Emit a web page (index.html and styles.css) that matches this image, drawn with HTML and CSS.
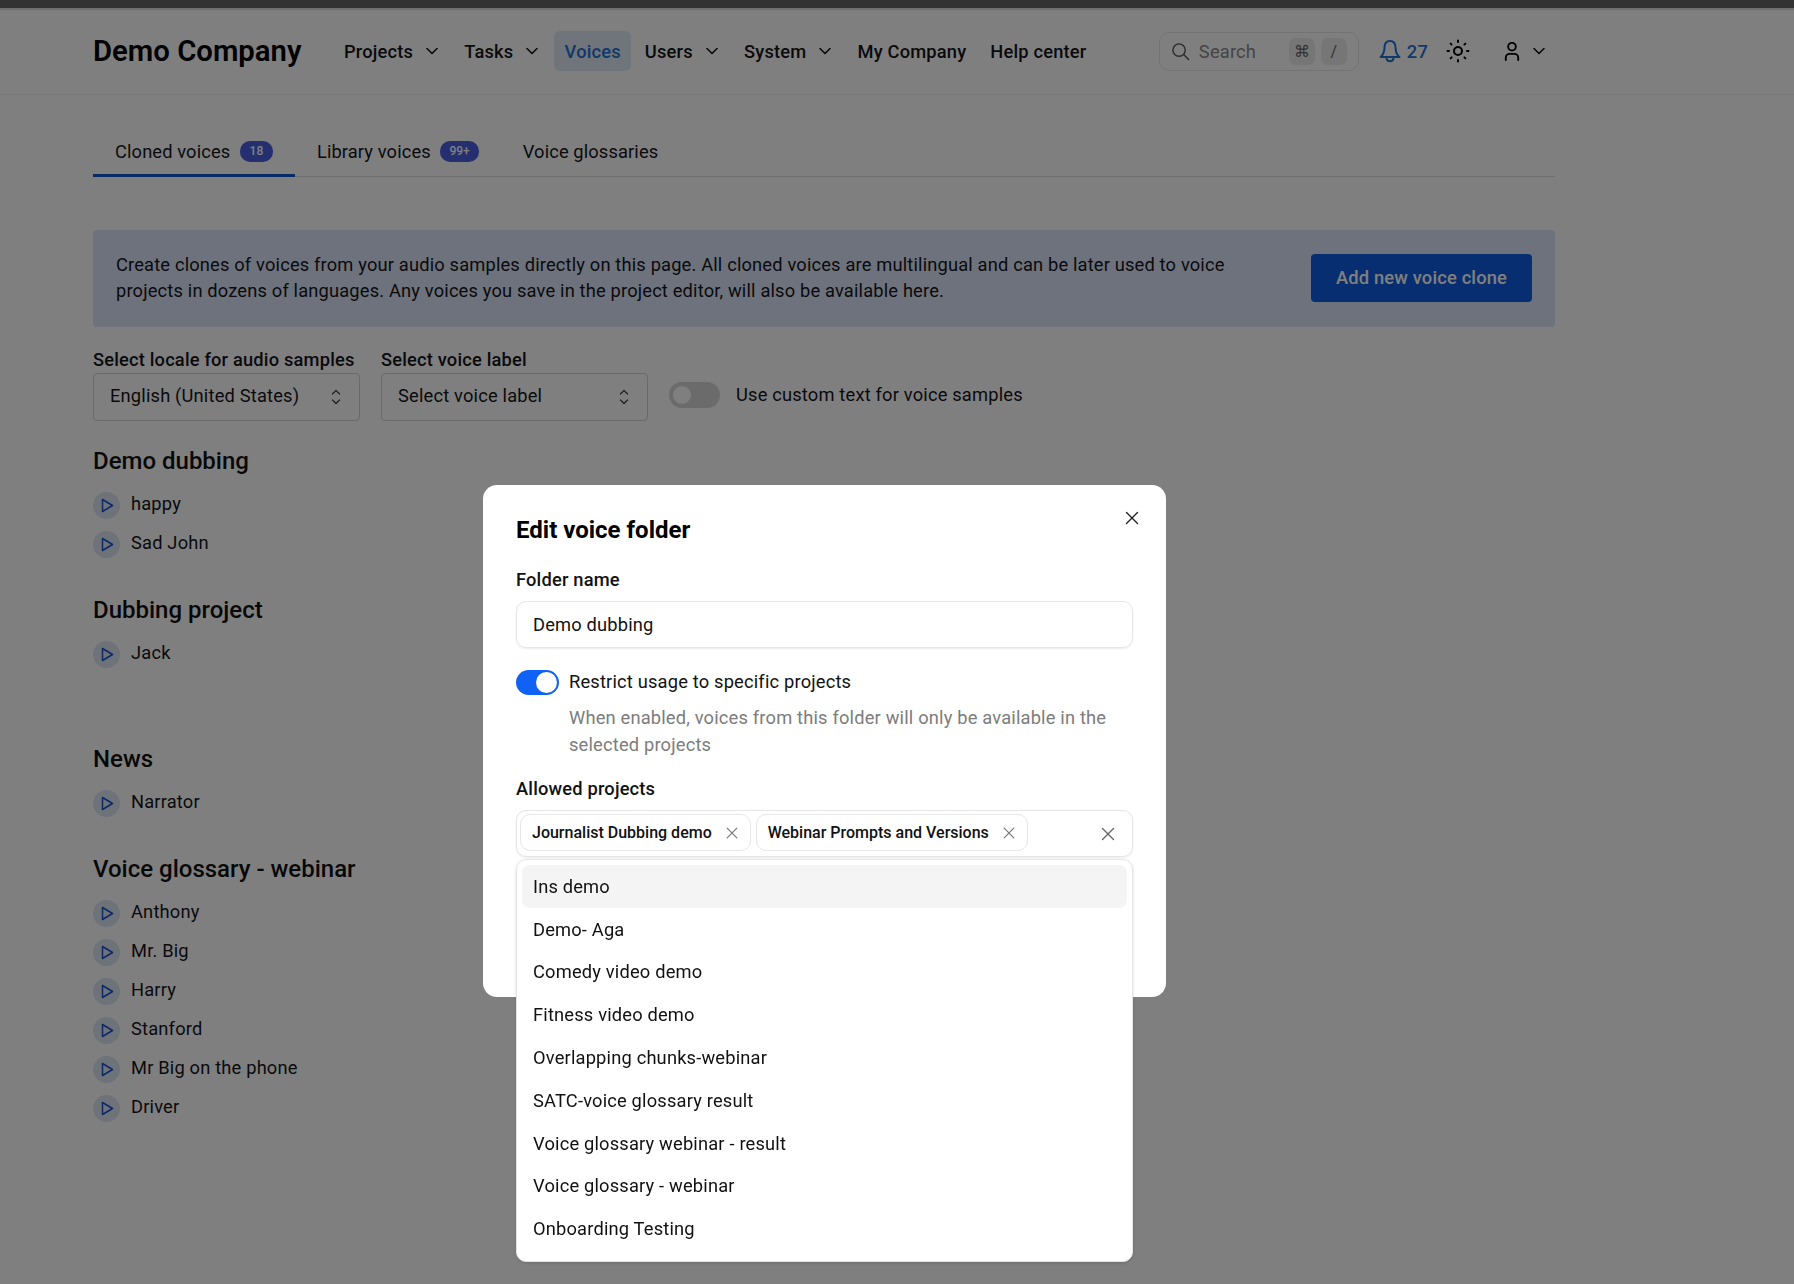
FILE: index.html
```html
<!DOCTYPE html>
<html lang="en">
<head>
<meta charset="UTF-8">
<meta name="viewport" content="width=device-width, initial-scale=1.0">
<title>Voices</title>
<link rel="stylesheet" href="styles.css">
</head>
<body>
<svg class="sprites" width="0" height="0">
  <symbol id="chevron" viewBox="0 0 16 16"><path d="M3 5.5l5 5 5-5" fill="none" stroke="currentColor" stroke-width="1.6" stroke-linecap="round" stroke-linejoin="round"/></symbol>
  <symbol id="updown" viewBox="0 0 12 20"><path d="M2.500 7L6 3.500 9.500 7M2.500 13L6 16.500 9.500 13" fill="none" stroke="currentColor" stroke-width="1.300" stroke-linecap="round" stroke-linejoin="round"/></symbol>
  <symbol id="play" viewBox="0 0 27 27"><path d="M9.500 7.500v12l10-6z" fill="none" stroke="currentColor" stroke-width="1.500" stroke-linejoin="round"/></symbol>
  <symbol id="close" viewBox="0 0 16 16"><path d="M2.500 2.500l11 11M13.500 2.500l-11 11" fill="none" stroke="currentColor" stroke-width="1.400" stroke-linecap="round"/></symbol>
</svg>

<div class="topbar"></div>

<header class="header">
  <div class="logo">Demo Company</div>
  <nav class="nav">
    <a class="nav-item">Projects <svg class="chev"><use href="#chevron"/></svg></a>
    <a class="nav-item">Tasks <svg class="chev"><use href="#chevron"/></svg></a>
    <a class="nav-item active">Voices</a>
    <a class="nav-item">Users <svg class="chev"><use href="#chevron"/></svg></a>
    <a class="nav-item">System <svg class="chev"><use href="#chevron"/></svg></a>
    <a class="nav-item">My Company</a>
    <a class="nav-item">Help center</a>
  </nav>
  <div class="header-right">
    <div class="search">
      <svg class="search-icon" viewBox="0 0 20 20"><circle cx="8.500" cy="8.500" r="6.500" fill="none" stroke="currentColor" stroke-width="1.500"/><path d="M13.500 13.500l5 5" stroke="currentColor" stroke-width="1.500" stroke-linecap="round"/></svg>
      <span class="search-text">Search</span>
      <span class="kbd">⌘</span>
      <span class="kbd">/</span>
    </div>
    <div class="bell">
      <svg class="bell-icon" viewBox="0 0 22 24"><path d="M11 2c-3.800 0-5.500 3-5.500 6.500 0 4.500-1 6.500-3.500 9.500h18c-2.500-3-3.500-5-3.500-9.500C16.500 5 14.800 2 11 2zM1.500 18h19M7.500 18.500c0 5 7 5 7 0" fill="none" stroke="currentColor" stroke-width="2" stroke-linecap="round" stroke-linejoin="round"/></svg>
      <span>27</span>
    </div>
    <svg class="sun" viewBox="0 0 24 24"><circle cx="12" cy="12" r="4" fill="none" stroke="currentColor" stroke-width="2"/><path d="M12 1.500v1.500M12 21v1.500M1.500 12H3M21 12h1.500M4.600 4.600l1 1M18.400 18.400l1 1M4.600 19.400l1-1M18.400 5.600l1-1" stroke="currentColor" stroke-width="2" stroke-linecap="round"/></svg>
    <svg class="person" viewBox="0 0 18 22"><circle cx="9" cy="6" r="4" fill="none" stroke="currentColor" stroke-width="2"/><path d="M2.500 20v-2.500c0-2.500 2-4 4-4h5c2 0 4 1.500 4 4V20" fill="none" stroke="currentColor" stroke-width="2" stroke-linecap="round"/></svg>
    <svg class="chev person-chev"><use href="#chevron"/></svg>
  </div>
</header>

<main class="page">
  <div class="tabs">
    <a class="tab active">Cloned voices <span class="badge">18</span></a>
    <a class="tab">Library voices <span class="badge">99+</span></a>
    <a class="tab">Voice glossaries</a>
  </div>

  <div class="banner">
    <p>Create clones of voices from your audio samples directly on this page. All cloned voices are multilingual and can be later used to voice projects in dozens of languages. Any voices you save in the project editor, will also be available here.</p>
    <button class="primary-btn">Add new voice clone</button>
  </div>

  <div class="filters">
    <div class="filter">
      <label class="label">Select locale for audio samples</label>
      <div class="select">English (United States) <svg class="updown"><use href="#updown"/></svg></div>
    </div>
    <div class="filter">
      <label class="label">Select voice label</label>
      <div class="select">Select voice label <svg class="updown"><use href="#updown"/></svg></div>
    </div>
    <div class="custom-text">
      <span class="switch-off"></span>
      Use custom text for voice samples
    </div>
  </div>

  <section class="folder">
    <h2>Demo dubbing</h2>
    <div class="voice"><span class="play"><svg><use href="#play"/></svg></span>happy</div>
    <div class="voice"><span class="play"><svg><use href="#play"/></svg></span>Sad John</div>
  </section>
  <section class="folder">
    <h2>Dubbing project</h2>
    <div class="voice"><span class="play"><svg><use href="#play"/></svg></span>Jack</div>
    <div class="voice"></div>
  </section>
  <section class="folder">
    <h2>News</h2>
    <div class="voice"><span class="play"><svg><use href="#play"/></svg></span>Narrator</div>
  </section>
  <section class="folder">
    <h2>Voice glossary - webinar</h2>
    <div class="voice"><span class="play"><svg><use href="#play"/></svg></span>Anthony</div>
    <div class="voice"><span class="play"><svg><use href="#play"/></svg></span>Mr. Big</div>
    <div class="voice"><span class="play"><svg><use href="#play"/></svg></span>Harry</div>
    <div class="voice"><span class="play"><svg><use href="#play"/></svg></span>Stanford</div>
    <div class="voice"><span class="play"><svg><use href="#play"/></svg></span>Mr Big on the phone</div>
    <div class="voice"><span class="play"><svg><use href="#play"/></svg></span>Driver</div>
  </section>
</main>

<div class="overlay"></div>

<div class="modal">
  <svg class="modal-close"><use href="#close"/></svg>
  <h3 class="modal-title">Edit voice folder</h3>
  <label class="field-label">Folder name</label>
  <div class="input">Demo dubbing</div>
  <div class="restrict">
    <span class="switch-on"></span>
    <div>
      <div class="restrict-title">Restrict usage to specific projects</div>
      <div class="restrict-help">When enabled, voices from this folder will only be available in the selected projects</div>
    </div>
  </div>
  <label class="field-label">Allowed projects</label>
  <div class="multi">
    <span class="chip">Journalist Dubbing demo <svg><use href="#close"/></svg></span>
    <span class="chip">Webinar Prompts and Versions <svg><use href="#close"/></svg></span>
    <svg class="multi-clear"><use href="#close"/></svg>
    <div class="dropdown">
      <div class="option hover">Ins demo</div>
      <div class="option">Demo- Aga</div>
      <div class="option">Comedy video demo</div>
      <div class="option">Fitness video demo</div>
      <div class="option">Overlapping chunks-webinar</div>
      <div class="option">SATC-voice glossary result</div>
      <div class="option">Voice glossary webinar - result</div>
      <div class="option">Voice glossary - webinar</div>
      <div class="option">Onboarding Testing</div>
    </div>
  </div>
</div>
</body>
</html>
```
FILE: styles.css
```css
* {
  box-sizing: border-box;
}

html, body {
  height: 100%;
}

body {
  margin: 0;
  background: #ffffff;
  color: #14151a;
  font-family: Roboto, "Liberation Sans", sans-serif;
  font-size: 18.3px;
  letter-spacing: 0.18px;
  overflow: hidden;
}

.sprites {
  position: absolute;
}

.topbar {
  height: 10px;
  background: #666666;
  border-bottom: 2px solid #e0e0e0;
}

/* Header */
.header {
  display: flex;
  align-items: center;
  height: 85px;
  padding: 0 239px 2px 93px;
  border-bottom: 1px solid #eeeeee;
}

.logo {
  font-size: 29.300px;
  font-weight: 600;
  letter-spacing: 0;
  color: #000000;
  margin-right: 32px;
}

.nav {
  display: flex;
  align-items: center;
  gap: 3px;
}

.nav-item {
  display: flex;
  align-items: center;
  height: 40px;
  padding: 0 10.500px;
  font-weight: 500;
  border-radius: 6px;
  white-space: pre;
}

.nav-item.active {
  background: #e0e9f7;
  color: #1f72d0;
}

.chev {
  width: 16px;
  height: 16px;
  margin-left: 6px;
  margin-right: 0.500px;
}

.header-right {
  display: flex;
  align-items: center;
  margin-left: auto;
  padding-right: 8px;
}

.search {
  display: flex;
  align-items: center;
  width: 200px;
  height: 39px;
  padding: 0 11px;
  border: 1px solid #e6e6e6;
  border-radius: 10px;
  color: #8a8a8a;
}

.search-icon {
  width: 19px;
  height: 19px;
  color: #555555;
  flex: none;
}

.search-text {
  margin-left: 9px;
  margin-right: auto;
}

.kbd {
  display: flex;
  align-items: center;
  justify-content: center;
  width: 26px;
  height: 27px;
  margin-left: 6px;
  border-radius: 7px;
  background: #ececec;
  font-size: 16px;
  color: #666666;
}

.bell {
  display: flex;
  align-items: center;
  margin-left: 20px;
  color: #1f72d0;
  font-weight: 500;
}

.bell-icon {
  width: 22px;
  height: 24px;
  margin-right: 6px;
}

.sun {
  width: 24px;
  height: 24px;
  margin-left: 18px;
  color: #000000;
}

.person {
  width: 18px;
  height: 21px;
  margin-left: 33px;
  color: #000000;
}

.person-chev {
  margin-left: 10px;
  margin-right: 0;
}

/* Main page */
.page {
  width: 1462px;
  margin-left: 93px;
}

.tabs {
  display: flex;
  height: 49px;
  margin-top: 33px;
  border-bottom: 1px solid #dddddd;
}

.tab {
  display: flex;
  align-items: center;
  height: 49px;
  padding: 0 22px 3px;
  letter-spacing: 0.120px;
  white-space: pre;
}

.tab.active {
  border-bottom: 3px solid #0d56cf;
  padding-bottom: 0;
}

.badge {
  display: flex;
  align-items: center;
  justify-content: center;
  height: 21px;
  min-width: 33px;
  padding: 0 9px;
  margin-left: 5px;
  border-radius: 10px;
  background: #4a5fe0;
  color: #ffffff;
  font-size: 12px;
  font-weight: 500;
  letter-spacing: 0;
}

.banner {
  display: flex;
  align-items: center;
  justify-content: space-between;
  height: 97px;
  margin-top: 53px;
  padding: 0 23px;
  border-radius: 4px;
  background: #dde5f8;
}

.banner p {
  width: 1130px;
  margin: 0 0 2px;
  line-height: 26px;
  letter-spacing: 0.165px;
}

.primary-btn {
  width: 221px;
  height: 48px;
  margin-bottom: 2px;
  border: none;
  border-radius: 4px;
  background: #0f5ce0;
  color: #ffffff;
  font-family: inherit;
  font-size: 18.300px;
  font-weight: 500;
  letter-spacing: 0.18px;
}

.filters {
  display: flex;
  align-items: flex-end;
  margin-top: 20px;
}

.filter {
  width: 267px;
  margin-right: 21px;
}

.label {
  display: block;
  font-weight: 500;
  line-height: 26px;
  white-space: nowrap;
}

.select {
  display: flex;
  align-items: center;
  justify-content: space-between;
  height: 48px;
  padding: 0 17px 4px 16px;
  border: 1px solid #cfd2d6;
  border-radius: 4px;
}

.updown {
  width: 12px;
  height: 20px;
  margin-top: 4px;
  color: #444444;
}

.custom-text {
  display: flex;
  align-items: center;
  height: 48px;
  padding-bottom: 5px;
}

.switch-off {
  position: relative;
  width: 51px;
  height: 26px;
  margin-right: 16px;
  border-radius: 13px;
  background: #d6d6d6;
}

.switch-off::after {
  content: "";
  position: absolute;
  left: 4px;
  top: 4px;
  width: 18px;
  height: 18px;
  border-radius: 50%;
  background: #ffffff;
}

.folder {
  margin-top: 25px;
  margin-bottom: 38px;
}

.folder + .folder {
  margin-top: 0;
}

.folder h2 {
  margin: 0 0 15px;
  font-size: 24px;
  font-weight: 500;
  line-height: 30px;
  letter-spacing: 0;
  color: #111111;
}

.voice {
  display: flex;
  align-items: center;
  height: 27px;
  padding-bottom: 2px;
  margin-bottom: 12px;
}

.voice:last-child {
  margin-bottom: 0;
}

.play {
  display: flex;
  width: 27px;
  height: 27px;
  margin-top: 4px;
  margin-right: 11px;
  border-radius: 50%;
  background: #dce4f2;
  color: #1650d6;
}

.play svg {
  width: 27px;
  height: 27px;
}

/* Modal */
.overlay {
  position: fixed;
  inset: 0;
  background: rgba(0, 0, 0, 0.5);
}

.modal {
  position: fixed;
  left: 483px;
  top: 485px;
  width: 683px;
  height: 512px;
  padding: 30px 33px 0;
  border-radius: 14px;
  background: #ffffff;
  color: #111111;
}

.modal-close {
  position: absolute;
  right: 26px;
  top: 25px;
  width: 16px;
  height: 16px;
  color: #222222;
}

.modal-title {
  margin: 0 0 22px;
  font-size: 24px;
  font-weight: 700;
  line-height: 30px;
  letter-spacing: 0;
  color: #000000;
}

.field-label {
  display: block;
  font-weight: 500;
  line-height: 26px;
  margin-bottom: 8px;
}

.input {
  display: flex;
  align-items: center;
  height: 47px;
  padding: 0 16px;
  border: 1px solid #e6e6e6;
  border-radius: 10px;
  box-shadow: 0 1px 2px rgba(0, 0, 0, 0.08);
}

.restrict {
  display: flex;
  margin-top: 21px;
  margin-bottom: 18px;
}

.switch-on {
  position: relative;
  flex: none;
  width: 43px;
  height: 25px;
  margin-top: 1px;
  margin-right: 10px;
  border-radius: 13px;
  background: #0f62f5;
}

.switch-on::after {
  content: "";
  position: absolute;
  right: 2px;
  top: 2px;
  width: 21px;
  height: 21px;
  border-radius: 50%;
  background: #ffffff;
}

.restrict-title {
  line-height: 26px;
}

.restrict-help {
  margin-top: 9px;
  color: #7c7c7c;
  line-height: 27px;
}

.multi {
  position: relative;
  display: flex;
  align-items: center;
  height: 47px;
  padding: 0 0 2px 3px;
  border: 1px solid #e6e6e6;
  border-radius: 10px;
  box-shadow: 0 1px 2px rgba(0, 0, 0, 0.08);
}

.chip {
  display: flex;
  align-items: center;
  height: 37px;
  padding: 0 11px;
  margin-right: 5px;
  border: 1px solid #e6e6e6;
  border-radius: 10px;
  font-size: 16px;
  font-weight: 500;
  letter-spacing: 0;
  white-space: pre;
}

.chip svg {
  width: 14px;
  height: 14px;
  margin-left: 9px;
  color: #777777;
}

.multi-clear {
  position: absolute;
  right: 16px;
  top: 15px;
  width: 16px;
  height: 16px;
  color: #666666;
}

.dropdown {
  position: absolute;
  left: -1px;
  right: -1px;
  top: 48px;
  height: 403px;
  padding: 5px;
  border: 1px solid #e6e6e6;
  border-radius: 10px;
  background: #ffffff;
  box-shadow: 0 1px 3px rgba(0, 0, 0, 0.15);
}

.option {
  display: flex;
  align-items: center;
  height: 42.800px;
  padding: 0 11px;
  border-radius: 8px;
}

.option.hover {
  background: #f4f4f4;
}
```
